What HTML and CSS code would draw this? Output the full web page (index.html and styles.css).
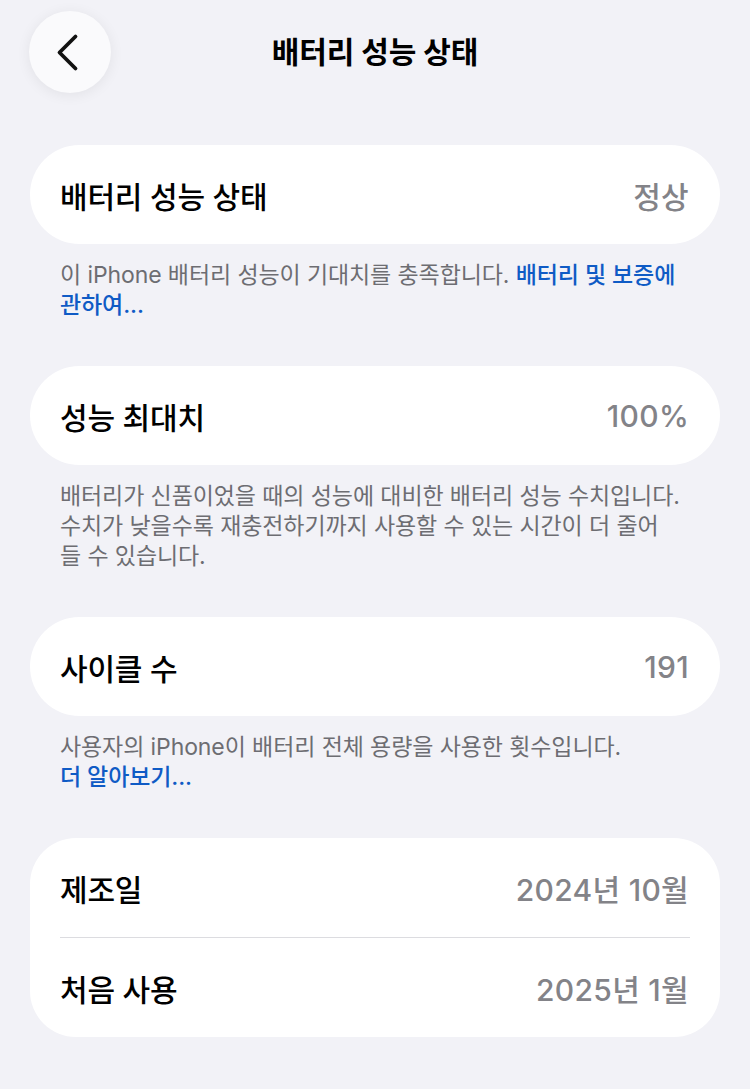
FILE: index.html
```html
<!DOCTYPE html>
<html lang="ko">
<head>
<meta charset="utf-8">
<title>배터리 성능 상태</title>
<link rel="stylesheet" href="styles.css">
</head>
<body>
<header class="nav">
  <div class="back">
    <svg class="chev" width="82" height="82" viewBox="0 0 82 82"><path d="M46.5 25.5 L30.5 41.5 L46.5 57.5" fill="none" stroke="#111" stroke-width="3.8" stroke-linecap="round" stroke-linejoin="round"/></svg>
  </div>
  <h1 class="title">배터리 성능 상태</h1>
  <div class="spacer"></div>
</header>
<main class="content">
  <section class="card">
    <div class="row"><span class="label">배터리 성능 상태</span><span class="value">정상</span></div>
  </section>
  <p class="footer">이 iPhone 배터리 성능이 기대치를 충족합니다. <span class="link">배터리 및 보증에<br>관하여...</span></p>

  <section class="card">
    <div class="row"><span class="label">성능 최대치</span><span class="value">100%</span></div>
  </section>
  <p class="footer">배터리가 신품이었을 때의 성능에 대비한 배터리 성능 수치입니다.<br>수치가 낮을수록 재충전하기까지 사용할 수 있는 시간이 더 줄어<br>들 수 있습니다.</p>

  <section class="card">
    <div class="row"><span class="label">사이클 수</span><span class="value">191</span></div>
  </section>
  <p class="footer">사용자의 iPhone이 배터리 전체 용량을 사용한 횟수입니다.<br><span class="link">더 알아보기...</span></p>

  <section class="card card-multi">
    <div class="row"><span class="label">제조일</span><span class="value">2024년 10월</span></div>
    <div class="sep"></div>
    <div class="row"><span class="label">처음 사용</span><span class="value">2025년 1월</span></div>
  </section>
</main>
</body>
</html>
```

FILE: styles.css
```css
* { box-sizing: border-box; }
html, body {
  margin: 0;
  padding: 0;
  background: #f2f2f7;
}
body {
  width: 750px;
  min-height: 1089px;
  font-family: Inter, "Noto Sans CJK KR", sans-serif;
  color: #000;
}
.nav {
  display: grid;
  grid-template-columns: 82px 1fr 82px;
  align-items: center;
  padding: 11px 29px 0 29px;
  height: 93px;
}
.back {
  width: 82px;
  height: 82px;
  border-radius: 50%;
  background: #fafafc;
  box-shadow: 0 2px 14px rgba(0, 0, 0, 0.07);
  display: flex;
  align-items: center;
  justify-content: center;
}
.chev { display: block; }
.title {
  margin: 0;
  text-align: center;
  font-size: 30px;
  font-weight: 700;
  letter-spacing: -0.1px;
  line-height: 40px;
}
.content {
  padding: 52px 30px 0 30px;
}
.card {
  background: #fff;
  border-radius: 50px;
}
.card-multi {
  border-radius: 46px;
}
.row {
  height: 99px;
  display: flex;
  align-items: center;
  justify-content: space-between;
  padding: 0 31px 0 30px;
}
.label {
  font-size: 30px;
  font-weight: 500;
  letter-spacing: -0.2px;
}
.value {
  font-size: 30px;
  font-weight: 500;
  color: #838388;
  letter-spacing: 0.3px;
}
.sep {
  height: 1px;
  background: #dcdce0;
  margin: 0 30px;
}
.footer {
  margin: 0 0 46px 0;
  padding: 16px 0 0 30px;
  font-size: 23px;
  line-height: 30px;
  color: #6d6d72;
  letter-spacing: -0.1px;
  word-break: keep-all;
}
.link {
  color: #0f5bc5;
  font-weight: 500;
}
```
